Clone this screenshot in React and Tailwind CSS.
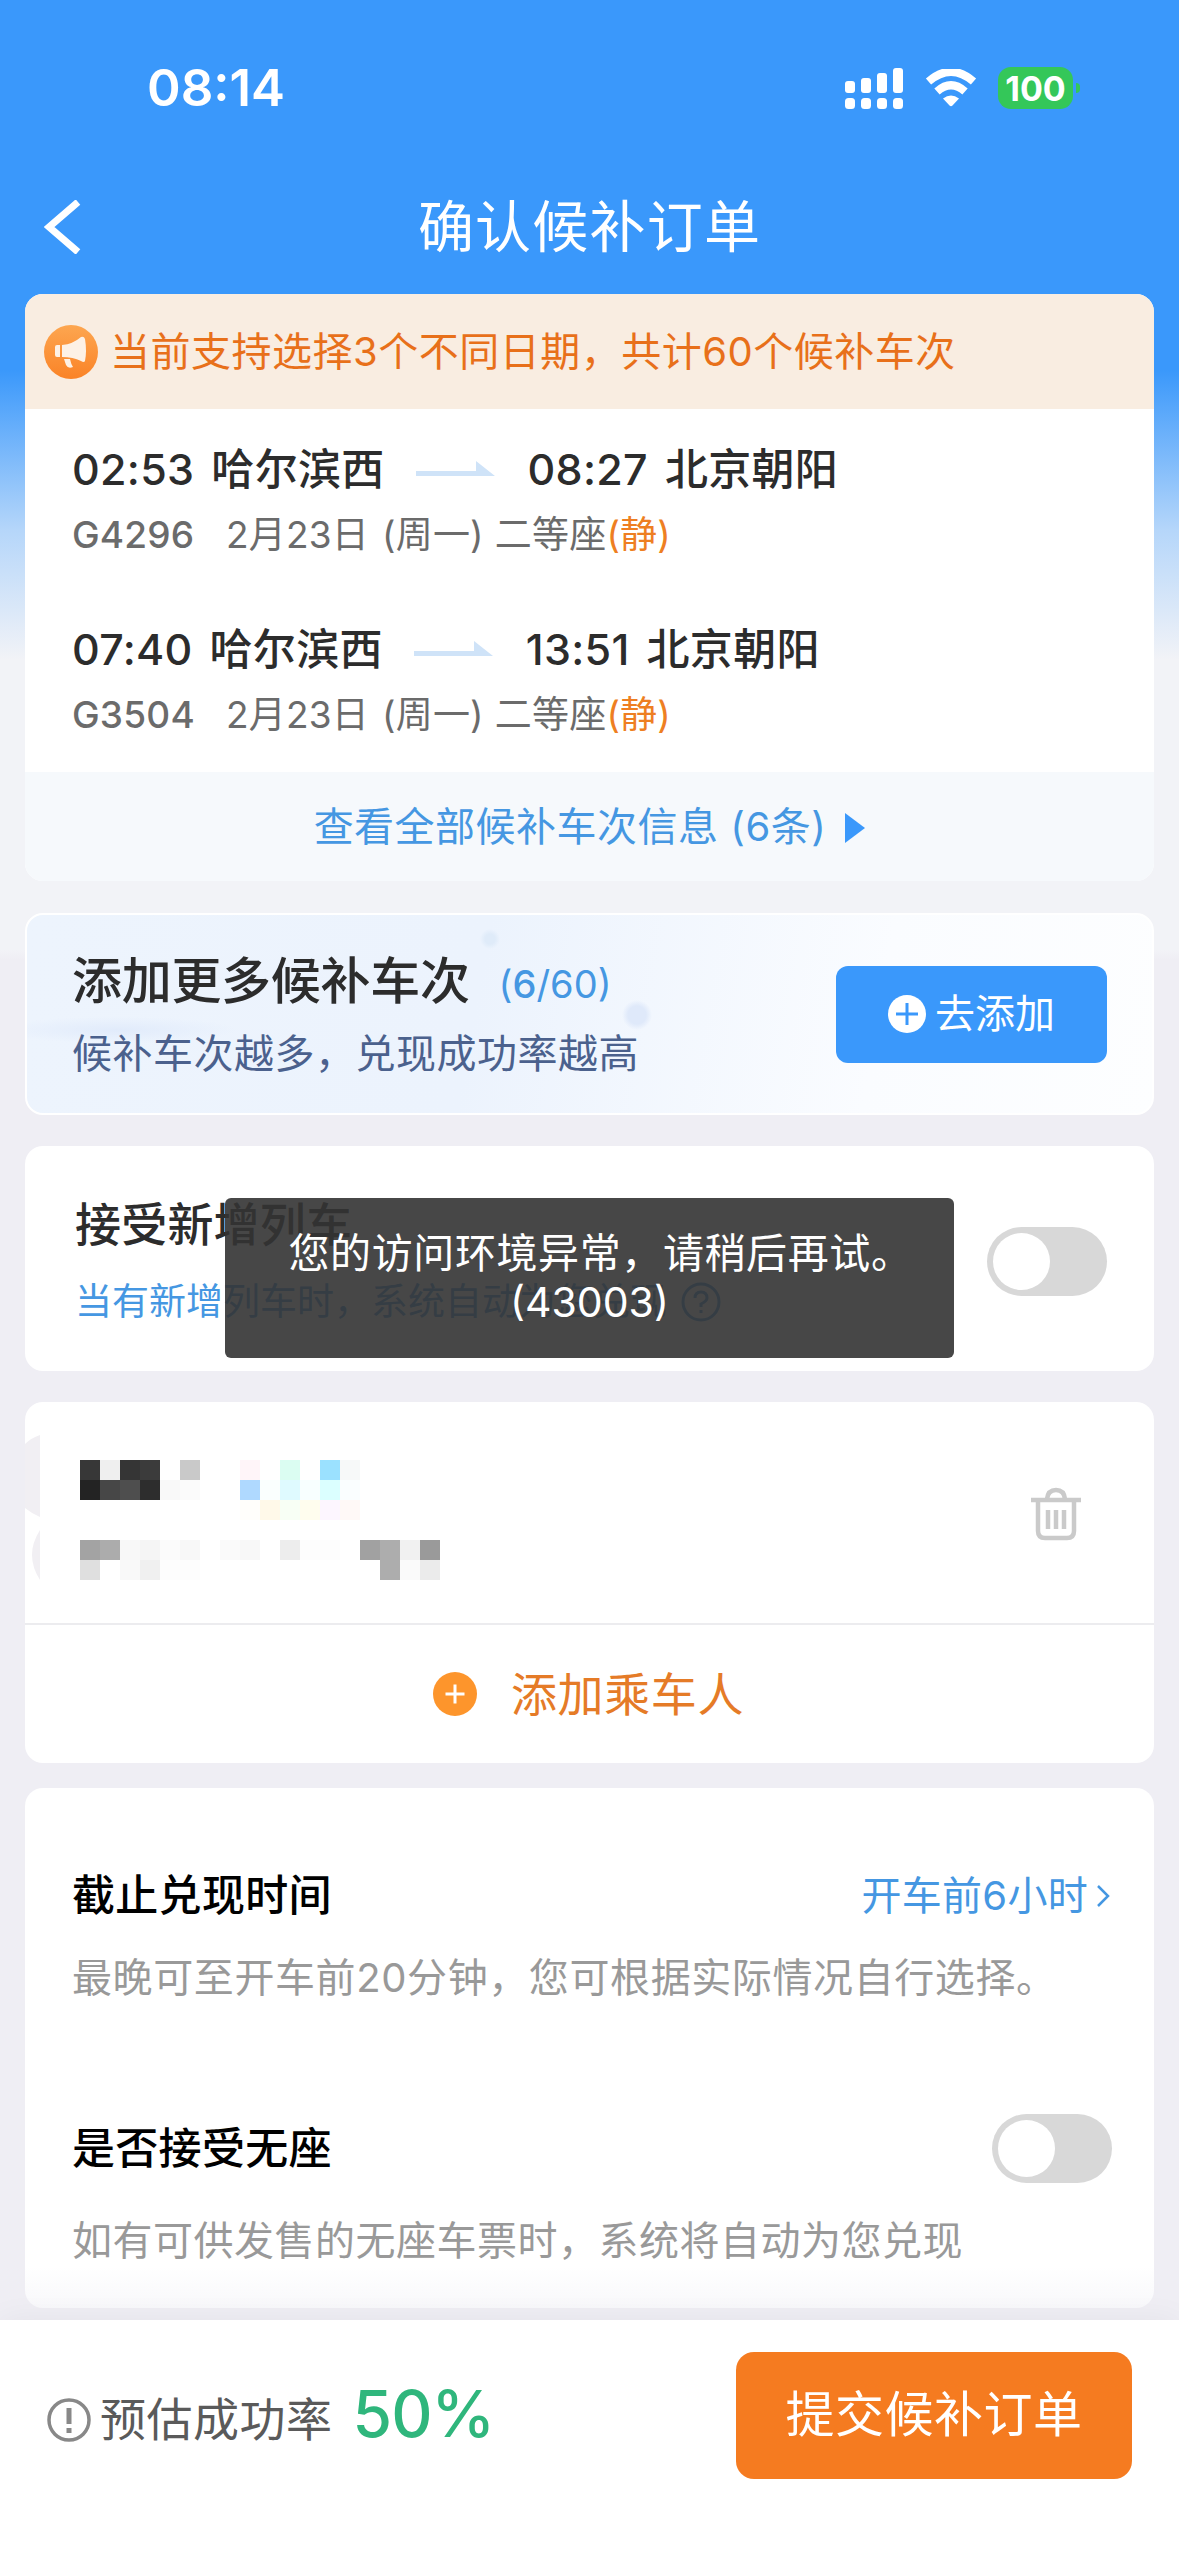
import { useState } from "react";

const trains = [
  { no: "G4296", start: "02:53", from: "哈尔滨西", end: "08:27", to: "北京朝阳" },
  { no: "G3504", start: "07:40", from: "哈尔滨西", end: "13:51", to: "北京朝阳" },
];

// colours of the masked passenger row, one array per line of 20px cells
const mosaic = [
  ["#373737", "#efefef", "#353535", "#3b3b3b", "", "#c9c9c9", "", "", "#fff5f9", "", "#dbfdf2", "", "#9be1ff", "#f7f9f9"],
  ["#232323", "#474747", "#4e4e4e", "#2d2d2d", "#f9f9f9", "#fbfbfb", "", "", "#afd9ff", "#fafffe", "#dffaff", "#f8ffff", "#dbffff", "#fafeff"],
  ["", "", "", "", "", "", "", "", "#fffefb", "#fff9e9", "#f8fff5", "#fffdee", "#fdf6ff", "#fff9f7"],
  [],
  ["#a3a3a3", "#acacac", "#f8f8f8", "#f5f5f5", "#fbfbfb", "#f8f8f8", "", "#fafafa", "#f8f8f8", "", "#ededed", "#fdfdfd", "#fdfdfd", "", "#a1a1a1", "#adadad", "#f1f1f1", "#9a9a9a"],
  ["#dfdfdf", "", "#f9f9f9", "#f0f0f0", "#fdfdfd", "#fdfdfd", "", "", "", "", "", "", "", "", "", "#adadad", "#fafafa", "#ebebeb"],
];

const Toggle = () => {
  const [on, setOn] = useState(false);
  return (
    <button onClick={() => setOn(!on)} className={`flex items-center w-[120px] h-[69px] rounded-full px-[6px] ${on ? "bg-[#3a98fb] justify-end" : "bg-[#d8d8d8]"}`}>
      <span className="w-[57px] h-[57px] rounded-full bg-white"></span>
    </button>
  );
};

const StatusBar = () => (
  <div className="flex items-center h-[176px] pl-[147px] pr-[99px] text-white">
    <span className="text-[51px] font-semibold">08:14</span>
    <svg className="ml-auto" width="60" height="44" viewBox="0 0 60 44" fill="#fff">
      <rect x="1" y="15" width="10" height="12" rx="3" />
      <rect x="17" y="12" width="10" height="15" rx="3" />
      <rect x="33" y="7" width="10" height="20" rx="3" />
      <rect x="49" y="2" width="10" height="25" rx="3" />
      <rect x="1" y="32" width="10" height="11" rx="3.5" />
      <rect x="17" y="32" width="10" height="11" rx="3.5" />
      <rect x="33" y="32" width="10" height="11" rx="3.5" />
      <rect x="49" y="32" width="10" height="11" rx="3.5" />
    </svg>
    <svg className="ml-[21px]" width="52" height="38" viewBox="0 0 52 38">
      <path d="M3.500 12.500Q26-7 48.500 12.500" fill="none" stroke="#fff" strokeWidth="8" />
      <path d="M12 22.500Q26 10 40 22.500" fill="none" stroke="#fff" strokeWidth="8" />
      <path d="M18 29.500Q26 23.500 34 29.500L27.500 36.500Q26 38 24.500 36.500Z" fill="#fff" />
    </svg>
    <div className="ml-[21px] flex items-center">
      <span className="flex items-center justify-center w-[75px] h-[42px] rounded-[13px] bg-[#34c759] text-[34px] font-bold">100</span>
      <span className="ml-[3px] w-[4px] h-[10px] rounded-r-full bg-[#34c759]"></span>
    </div>
  </div>
);

const TrainRow = ({ train }) => (
  <div>
    <div className="flex items-center h-[66px] text-[43px] font-medium tracking-[0.3px] text-[#2c2c2c] whitespace-nowrap">
      <span>{train.start}</span>
      <span className="ml-[17px]">{train.from}</span>
      <svg className="ml-[31px] mr-[32px]" width="80" height="16" viewBox="0 0 80 16">
        <path d="M0 10H60V0L79 15H0Z" fill="#cfe3f8" />
      </svg>
      <span>{train.end}</span>
      <span className="ml-[17px]">{train.to}</span>
    </div>
    <div className="flex items-center h-[66px] text-[37px] tracking-[0.2px] text-[#6b6b6b] whitespace-nowrap">
      <span className="w-[154px] font-medium">{train.no}</span>
      <span>2月23日</span>
      <span className="ml-[13px]">(周一)</span>
      <span className="ml-[11px]">二等座</span>
      <span className="text-[#ee7f22]">(静)</span>
    </div>
  </div>
);

const App = () => {
  return (
    <div className="relative flex flex-col w-[1179px] h-[2556px] overflow-hidden bg-[linear-gradient(180deg,#3a98fb_0px,#3a98fb_370px,#b5d6fa_530px,#f2f3f7_660px,#f2f3f7_950px,#efeef4_960px)] font-[Inter,'Noto_Sans_CJK_SC',sans-serif]">
      <StatusBar />
      <div className="flex items-center h-[118px] px-[44px] pb-[16px] text-white">
        <svg width="38" height="54" viewBox="0 0 38 54">
          <path d="M34 2L5 27L34 52" fill="none" stroke="#fff" strokeWidth="7" />
        </svg>
        <h1 className="flex-1 text-center text-[56px] tracking-[1.2px] pr-[38px]">确认候补订单</h1>
      </div>

      <div className="mx-[25px] h-[587px] shrink-0 rounded-[18px] overflow-hidden bg-white">
        <div className="flex items-center h-[115px] pl-[19px] bg-[#f9ede1] text-[40px] tracking-[0.5px] text-[#e8701a]">
          <svg className="mr-[12px]" width="54" height="54" viewBox="0 0 54 54">
            <defs>
              <linearGradient id="horn" x1="0" y1="0" x2="0" y2="1">
                <stop offset="0" stopColor="#fda650" />
                <stop offset="1" stopColor="#fa8327" />
              </linearGradient>
            </defs>
            <circle cx="27" cy="27" r="27" fill="url(#horn)" />
            <path d="M11 22Q11 20 13 20H16V32H13Q11 32 11 30ZM18 20Q29 19 37 12Q40 11 41 14Q43 26 41 36Q40 38 37 36Q29 32 18 32Z" fill="#fdf1e5" />
            <path d="M20 34H26Q27 39 29 42Q24 44 22 40Z" fill="#fdf1e5" />
          </svg>
          当前支持选择3个不同日期，共计60个候补车次
        </div>
        <div className="flex flex-col justify-between h-[363px] pl-[47px] pt-[27px] pb-[24px]">
          {trains.map((train) => (
            <TrainRow key={train.no} train={train} />
          ))}
        </div>
        <div className="flex items-center justify-center h-[109px] bg-[#f6f9fc] text-[40px] tracking-[0.5px] text-[#4597e2]">
          查看全部候补车次信息 (6条)
          <svg className="mt-[3px] ml-[19px]" width="20" height="30" viewBox="0 0 20 30">
            <path d="M0 0L20 15L0 30Z" fill="#3a98fb" />
          </svg>
        </div>
      </div>

      <div className="flex items-center justify-between mx-[25px] mt-[32px] h-[202px] shrink-0 rounded-[18px] border-2 border-white pl-[45px] pr-[45px] bg-[radial-gradient(circle_at_610px_100px,#dfe9fa_0,#dfe9fa_9px,transparent_15px),radial-gradient(circle_at_463px_24px,#dfebf9_0,#dfebf9_5px,transparent_10px),radial-gradient(ellipse_at_90px_115px,#e1ebfb_0,transparent_120px),linear-gradient(100deg,#edf4fd,#ecf3fd_40%,#fafcff_75%,#fdfeff)]">
        <div className="pt-[6px]">
          <div className="flex items-center h-[74px]">
            <span className="text-[50px] tracking-[-0.3px] font-medium text-[#2c2c2c]">添加更多候补车次</span>
            <span className="mt-[6px] ml-[29px] text-[38px] text-[#4597e2]">(<b className="font-medium">6</b>/60)</span>
          </div>
          <p className="h-[72px] leading-[72px] text-[40px] tracking-[0.5px] text-[#4b618d]">候补车次越多，兑现成功率越高</p>
        </div>
        <button className="flex items-center justify-center w-[271px] h-[97px] rounded-[12px] bg-[#3a98fb] text-[40px] text-white">
          <svg className="mr-[9px]" width="38" height="38" viewBox="0 0 38 38">
            <circle cx="19" cy="19" r="19" fill="#fff" />
            <path d="M19 8V30M8 19H30" stroke="#3a98fb" strokeWidth="3" />
          </svg>
          去添加
        </button>
      </div>

      <div className="flex items-center justify-between mx-[25px] mt-[31px] h-[225px] shrink-0 rounded-[18px] pl-[50px] pt-[5px] pr-[47px] bg-white">
        <div className="pt-[4px]">
          <h2 className="h-[78px] leading-[78px] text-[46px] tracking-[0.2px] font-medium text-[#2c2c2c]">接受新增列车</h2>
          <p className="flex items-center h-[78px] text-[37px] text-[#4597e2]">
            当有新增列车时，系统自动为您兑现
            <svg className="ml-[14px]" width="40" height="40" viewBox="0 0 40 40" fill="none" stroke="#4597e2" strokeWidth="3">
              <circle cx="20" cy="20" r="18" />
              <path d="M14 16Q14 10 20 10T26 16Q26 19 20 22V25M20 28V31" />
            </svg>
          </p>
        </div>
        <Toggle />
      </div>

      <div className="mx-[25px] mt-[31px] h-[361px] shrink-0 rounded-[18px] overflow-hidden bg-white">
        <div className="flex h-[223px] border-b-2 border-[#ececef]">
          <svg width="15" height="160" viewBox="0 0 15 160" className="mt-[30px]" fill="#f1eff3">
            <path d="M0 12Q6 6 15 3V85Q6 81 0 76Z" />
            <path d="M15 98Q-1 123 15 148Z" />
          </svg>
          <div className="ml-[40px] mt-[58px]">
            {mosaic.map((line, i) => (
              <div key={i} className="flex h-[20px]">
                {line.map((color, j) => (
                  <span key={j} className="w-[20px] h-[20px]" style={{ backgroundColor: color || "#fff" }}></span>
                ))}
              </div>
            ))}
          </div>
          <svg className="ml-auto mr-[72px] mt-[85px]" width="52" height="54" viewBox="0 0 52 54" fill="none" stroke="#cacaca" strokeWidth="4.500">
            <path d="M1 13H51M17 12Q18 3 26 3T35 12" />
            <path d="M8 14V44Q8 51 15 51H37Q44 51 44 44V14M18 23V42M26 23V42M34 23V42" />
          </svg>
        </div>
        <div className="flex items-center justify-center h-[138px] pr-[2px] text-[46px] tracking-[0.6px] text-[#e57b27]">
          <svg className="mr-[34px]" width="44" height="44" viewBox="0 0 44 44">
            <circle cx="22" cy="22" r="22" fill="#fd952c" />
            <path d="M22 12.500V31.500M12.500 22H31.500" stroke="#fff" strokeWidth="3" />
          </svg>
          添加乘车人
        </div>
      </div>

      <div className="mx-[25px] mt-[25px] h-[520px] shrink-0 rounded-[18px] px-[47px] pt-[66px] bg-[linear-gradient(180deg,#fff_92%,#f8f8fb)]">
        <div className="flex items-center justify-between h-[82px]">
          <h2 className="text-[43px] tracking-[0.3px] font-medium text-black">截止兑现时间</h2>
          <span className="flex items-center -mr-[4px] pt-[2px] text-[40px] tracking-[0.3px] text-[#4597e2]">
            开车前6小时
            <svg className="ml-[8px] mr-[1px]" width="14" height="24" viewBox="0 0 14 24" fill="none" stroke="#4597e2" strokeWidth="2.500">
              <path d="M2 2L12 12L2 22" />
            </svg>
          </span>
        </div>
        <p className="h-[84px] leading-[84px] text-[40px] tracking-[0.6px] text-[#999]">最晚可至开车前20分钟，您可根据实际情况自行选择。</p>
        <div className="flex items-center justify-between mt-[86px] h-[84px]">
          <h2 className="text-[43px] tracking-[0.3px] font-medium text-black">是否接受无座</h2>
          <div className="-mr-[5px]"><Toggle /></div>
        </div>
        <p className="mt-[9px] h-[84px] leading-[84px] text-[40px] tracking-[0.5px] text-[#999]">如有可供发售的无座车票时，系统将自动为您兑现</p>
      </div>

      <div className="flex items-start mt-[12px] h-[236px] shrink-0 pl-[47px] pr-[47px] pt-[32px] bg-white shadow-[0_0_30px_rgba(0,0,0,0.05)]">
        <div className="flex items-center h-[127px]">
          <svg className="mt-[9px]" width="44" height="44" viewBox="0 0 44 44" fill="none" stroke="#888">
            <circle cx="22" cy="22" r="20" strokeWidth="3.500" />
            <path d="M22 10V26M22 30V35" strokeWidth="5" />
          </svg>
          <span className="ml-[9px] mt-[8px] text-[46px] tracking-[0.5px] text-[#5a5a5a]">预估成功率</span>
          <span className="-mt-[3px] ml-[20px] text-[64px] font-medium tracking-[-0.9px] text-[#2fb67c]">50%</span>
        </div>
        <button className="ml-auto w-[396px] h-[127px] rounded-[18px] bg-[#f57b20] pb-[2px] text-[49px] tracking-[0.5px] text-white">提交候补订单</button>
      </div>

      <div className="absolute left-[225px] top-[1198px] flex flex-col items-center justify-center w-[729px] h-[160px] rounded-[6px] bg-[#333]/90 text-[41px] leading-[49px] text-white">
        <span className="pl-[22px] tracking-[0.6px]">您的访问环境异常，请稍后再试。</span>
        <span>(43003)</span>
      </div>
    </div>
  );
};

export default App;
